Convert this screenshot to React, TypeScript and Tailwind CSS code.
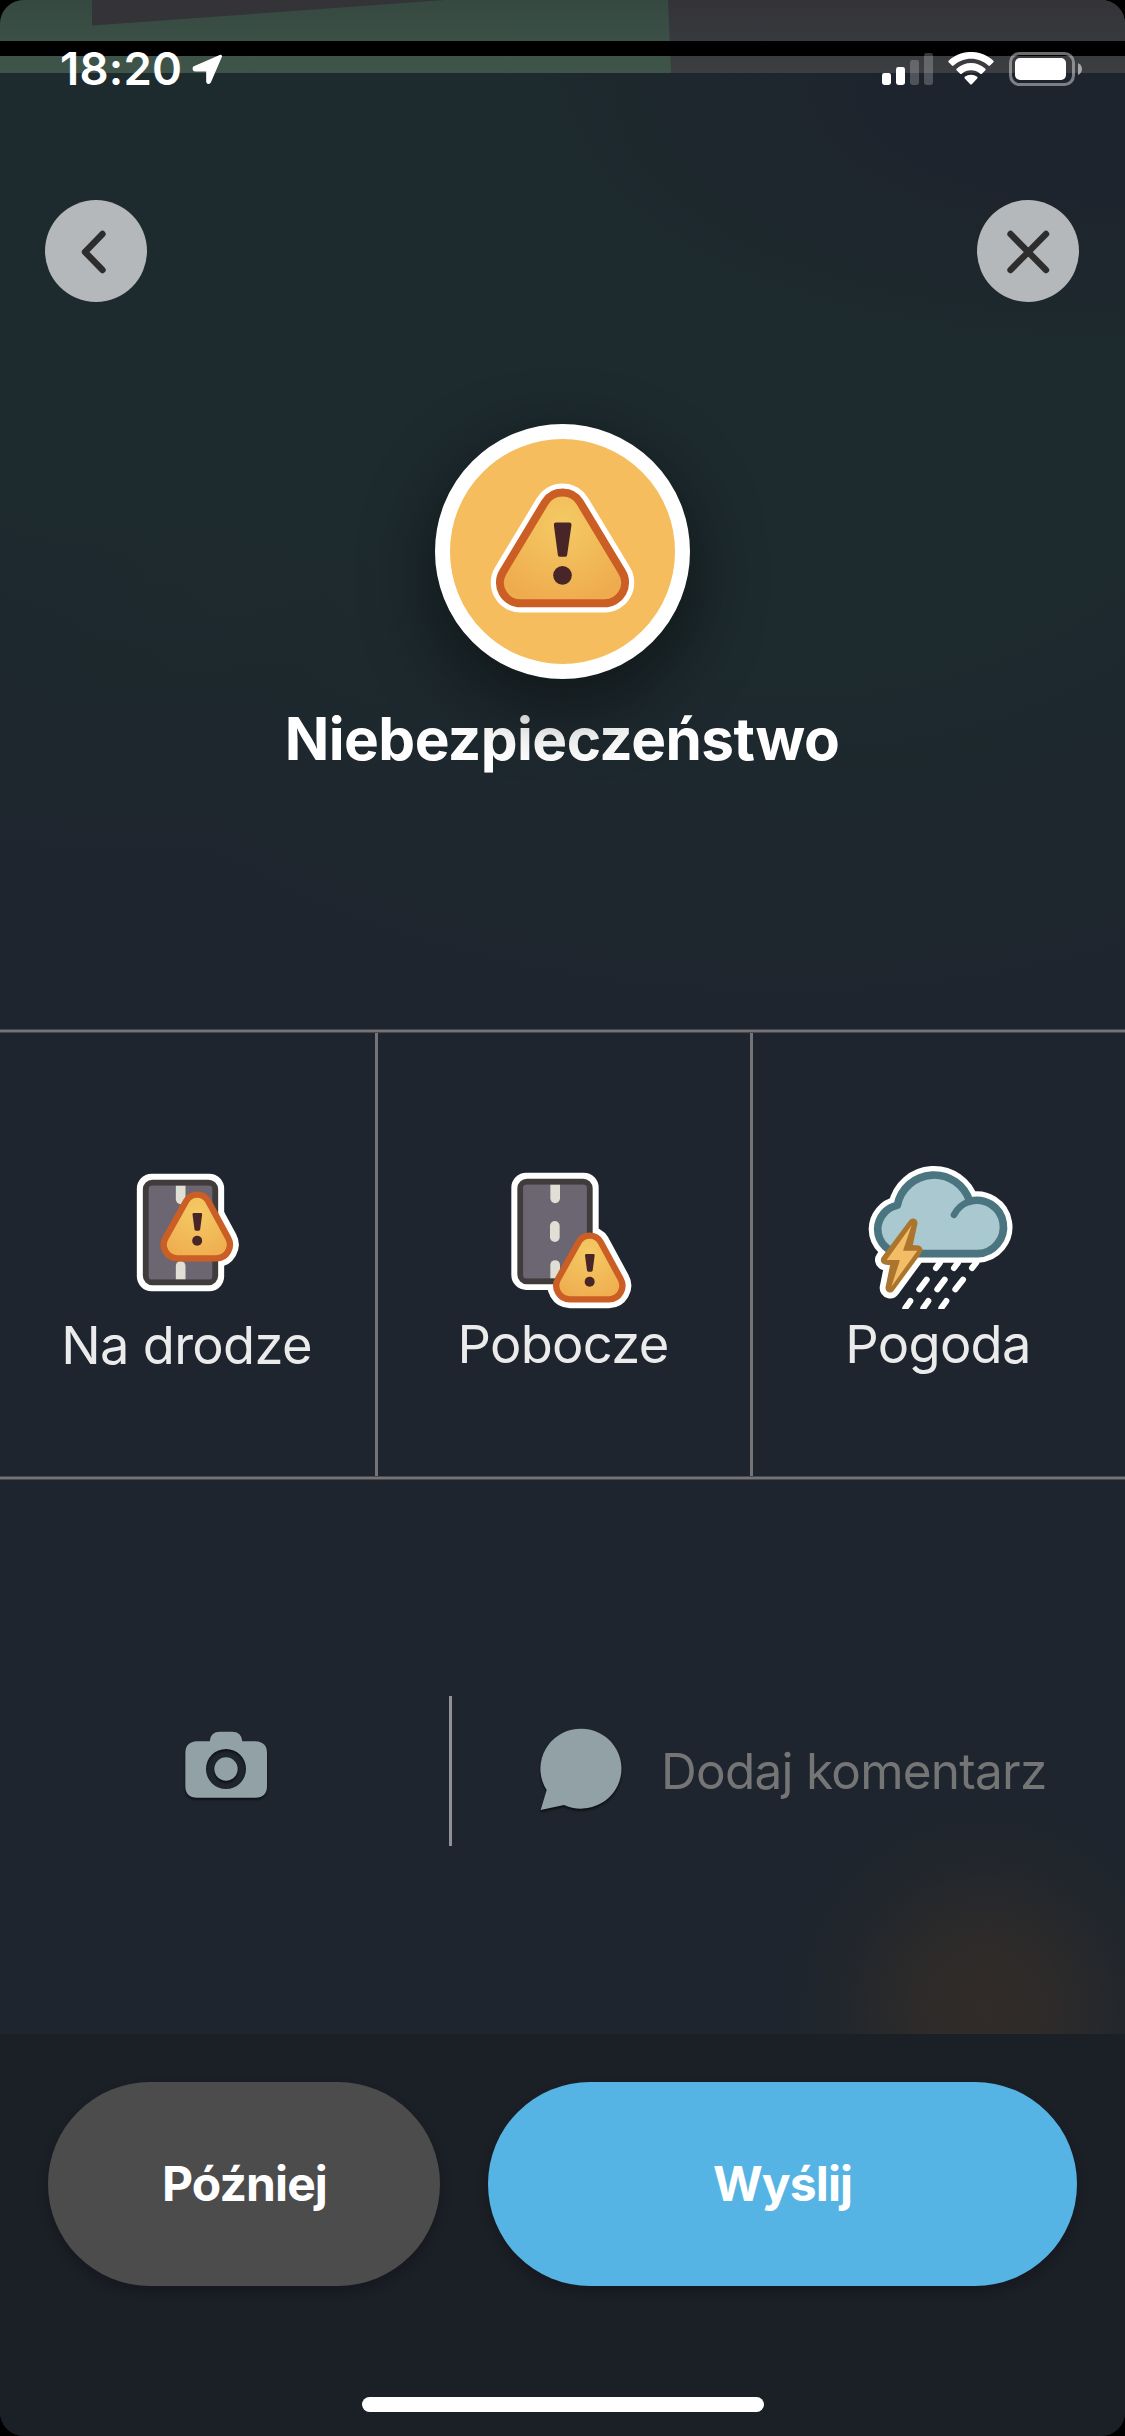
import React from "react";

function StatusBar() {
  return (
    <div className="absolute inset-x-0 top-0 flex h-[138px] items-start text-white">
      <span className="ml-[60px] mt-[42px] w-[124px] whitespace-nowrap text-[45.5px] font-semibold leading-[54px] tracking-[0.2px]">
        18:20
      </span>
      <svg className="ml-[7px] mt-[53px] h-8 w-8" viewBox="0 0 32 32">
        <path
          d="M29 2.6 L2.6 14.2 Q1.6 17.4 4 17.8 H15 Q15.9 17.8 15.9 18.7 V29 Q17 31.4 19 29.6 L30.3 3.4 Q30.3 2 29 2.6 Z"
          fill="white"
          stroke="white"
          strokeWidth="1.4"
          strokeLinejoin="round"
        />
      </svg>
      <svg className="ml-auto mr-[15px] mt-[53px] h-8 w-[51px]" viewBox="0 0 51 32" fill="white">
        <rect x="0" y="20" width="9" height="12" rx="2.4" />
        <rect x="14" y="14" width="9" height="18" rx="2.4" />
        <rect x="28" y="7" width="9" height="25" rx="2.4" opacity=".22" />
        <rect x="42" y="0" width="9" height="32" rx="2.4" opacity=".22" />
      </svg>
      <svg className="mr-[15px] mt-[52px] h-[33px] w-[46px]" viewBox="0 0 46 33" fill="white">
        <path d="M0.6 8.8 C13 -3 33 -3 45.4 8.8 Q46 9.6 45.4 10.3 L42 13.6 Q41.2 14.2 40.4 13.6 C30.5 4.6 15.5 4.6 5.6 13.6 Q4.8 14.2 4 13.6 L0.6 10.3 Q0 9.6 0.6 8.8 Z" />
        <path d="M8.6 16.7 C17 9.2 29 9.2 37.4 16.7 Q38 17.5 37.4 18.2 L33.9 21.7 Q33.1 22.4 32.3 21.7 C27 17.2 19 17.2 13.7 21.7 Q12.9 22.4 12.1 21.7 L8.6 18.2 Q8 17.5 8.6 16.7 Z" />
        <path d="M16.8 24.8 C20.2 22 25.8 22 29.2 24.8 Q30 25.6 29.2 26.4 L23.8 32.2 Q23 32.9 22.2 32.2 L16.8 26.4 Q16 25.6 16.8 24.8 Z" />
      </svg>
      <svg className="mr-[42px] mt-[52px] h-[34px] w-[74px]" viewBox="0 0 74 34">
        <rect x="1.5" y="1.5" width="63" height="31" rx="9" fill="none" stroke="white" strokeOpacity=".42" strokeWidth="3" />
        <rect x="6" y="6" width="51" height="22" rx="5" fill="white" />
        <path d="M69 11 Q73 13 73 17 Q73 21 69 23 Z" fill="white" fillOpacity=".55" />
      </svg>
    </div>
  );
}

/* Strip of the map that stays visible above the sheet */
function MapStrip() {
  return (
    <svg className="block h-[73px] w-full shrink-0" viewBox="0 0 1125 73">
      <defs>
        <linearGradient id="land" x1="0" y1="0" x2="0" y2="1">
          <stop offset="0" stopColor="#354941" />
          <stop offset="1" stopColor="#40554a" />
        </linearGradient>
        <linearGradient id="street" x1="0" y1="0" x2="0" y2="1">
          <stop offset="0" stopColor="#333338" />
          <stop offset="1" stopColor="#3c3e42" />
        </linearGradient>
      </defs>
      <rect width="1125" height="73" fill="url(#land)" />
      <path d="M668 0 H1125 V73 H671 Z" fill="url(#street)" />
      <path d="M92 0 H445 L92 25.5 Z" fill="#333338" />
      <rect y="41" width="1125" height="15" fill="black" />
    </svg>
  );
}

function RoundButton({ label, children }: { label: string; children: React.ReactNode }) {
  return (
    <button aria-label={label} className="h-[102px] w-[102px] rounded-full bg-[#b4b8ba]">
      <svg
        className="h-full w-full"
        viewBox="0 0 102 102"
        fill="none"
        stroke="#2d2d2d"
        strokeWidth="6.4"
        strokeLinecap="round"
        strokeLinejoin="round"
      >
        {children}
      </svg>
    </button>
  );
}

function HazardBadge() {
  return (
    <div className="relative z-10 h-[255px] w-[255px] rounded-full border-[15px] border-white bg-[#f5bd5d] shadow-[0_24px_64px_6px_rgba(10,14,14,0.6)]">
      <svg className="h-[225px] w-[225px]" viewBox="150 117 675 675">
        <defs>
          <radialGradient id="hazard" gradientUnits="userSpaceOnUse" cx="487" cy="370" r="240">
            <stop offset="0" stopColor="#f4ca64" />
            <stop offset="1" stopColor="#efac4f" />
          </radialGradient>
        </defs>
        <path
          d="M434.5 307.5 A62 62 0 0 1 540.5 307.5 L666 515.5 A62 62 0 0 1 613 610 H362 A62 62 0 0 1 309 515.5 Z"
          fill="white"
          stroke="white"
          strokeWidth="55"
        />
        <path
          d="M434.5 307.5 A62 62 0 0 1 540.5 307.5 L666 515.5 A62 62 0 0 1 613 610 H362 A62 62 0 0 1 309 515.5 Z"
          fill="url(#hazard)"
          stroke="#cb5e24"
          strokeWidth="24"
        />
        <path
          d="M468 374 H508 L495 464 H480 Z"
          fill="#482628"
          stroke="#482628"
          strokeWidth="13"
          strokeLinejoin="round"
        />
        <circle cx="487.5" cy="526" r="28" fill="#482628" />
      </svg>
    </div>
  );
}

const SMALL_TRIANGLE =
  "M437 153 A38 38 0 0 1 503 153 L563 264 A40 41 0 0 1 528 325 H411 A41 41 0 0 1 375 264 Z";

function SmallTriangle() {
  return (
    <g>
      <path d={SMALL_TRIANGLE} fill="url(#hazardSmall)" stroke="#cb5e24" strokeWidth="19" />
      <path d="M460 193 H481 L475 238 H466 Z" fill="#482628" stroke="#482628" strokeWidth="8" strokeLinejoin="round" />
      <circle cx="470" cy="272" r="15" fill="#482628" />
    </g>
  );
}

function RoadBase() {
  return (
    <g>
      <rect x="316" y="98" width="208" height="299" rx="20" fill="#6c6672" stroke="#403c3b" strokeWidth="18" />
      <rect x="325" y="107" width="190" height="281" rx="8" fill="#6c6672" />
      <path d="M406 107 H435 V148 A14.5 14.5 0 0 1 406 148 Z" fill="#dfdfd6" />
      <path d="M406 388 H435 V348 A14.5 14.5 0 0 0 406 348 Z" fill="#dfdfd6" />
    </g>
  );
}

function OnRoadIcon() {
  return (
    <svg className="h-36 w-[150px]" viewBox="217.5 45 450 432">
      <defs>
        <radialGradient id="hazardSmall" gradientUnits="userSpaceOnUse" cx="470" cy="185" r="150">
          <stop offset="0" stopColor="#f4ca64" />
          <stop offset="1" stopColor="#efac4f" />
        </radialGradient>
      </defs>
      <rect x="289" y="71" width="262" height="353" rx="45" fill="white" />
      <path d={SMALL_TRIANGLE} fill="white" stroke="white" strokeWidth="53" />
      <RoadBase />
      <SmallTriangle />
    </svg>
  );
}

function ShoulderIcon() {
  return (
    <svg className="h-36 w-[150px]" viewBox="177 45 450 432">
      <rect x="244" y="68" width="262" height="352" rx="45" fill="white" />
      <g transform="translate(9 123)">
        <path d={SMALL_TRIANGLE} fill="white" stroke="white" strokeWidth="53" />
      </g>
      <g transform="translate(-45 -3)">
        <RoadBase />
      </g>
      <rect x="360" y="213" width="29" height="63" rx="14.5" fill="#dfdfd6" />
      <g transform="translate(9 123)">
        <SmallTriangle />
      </g>
    </svg>
  );
}

const CLOUD =
  "M474 341 H248 A75 75 0 0 1 173 267 A75 75 0 0 1 232 196 A112 112 0 0 1 449 184 A80 80 0 1 1 474 341 Z";
const BOLT = "M279 249 L196 360 L226 365 L210 444 L294 330 L262 327 Z";

function WeatherIcon() {
  return (
    <svg className="h-36 w-[150px]" viewBox="132 75 450 432" strokeLinecap="round" strokeLinejoin="round">
      <path
        d="M360 368 L348 384 M414 368 L402 384 M469 368 L456 384 M320 419 L298 448 M374 419 L352 448 M429 419 L406 448 M271 483 L256 504 M325 483 L310 504 M379 483 L364 504"
        stroke="white"
        strokeWidth="18"
        fill="none"
      />
      <path d={CLOUD} fill="white" stroke="white" strokeWidth="54" />
      <path d={BOLT} fill="white" stroke="white" strokeWidth="62" />
      <path d={CLOUD} fill="#a9c8d0" stroke="#4a747f" strokeWidth="23" />
      <path d="M449 184 Q416 196 402 224" fill="none" stroke="#4a747f" strokeWidth="20" />
      <path d={BOLT} fill="#f3bd68" stroke="#ab752d" strokeWidth="27" />
      <path d="M275 256 L200 360 H240 L214 440 L292 332 H249 Z" fill="#f3bd68" strokeWidth="0" />
    </svg>
  );
}

function CameraIcon() {
  return (
    <svg
      className="mt-[30px] h-[77px] w-[92px] drop-shadow-[0_2px_1px_rgba(0,0,0,0.6)]"
      viewBox="120 138 276 231"
      fill="#92a1a6"
    >
      <path
        fillRule="evenodd"
        d="M171 184 H209 Q211 155 240 155 H276 Q305 155 307 184 H346 Q381 186 381 219 V318 Q381 353 346 353 H171 Q136 353 136 318 V219 Q136 186 171 184 Z M258 207 A60 60 0 1 0 258 327 A60 60 0 1 0 258 207 Z"
      />
      <circle cx="258" cy="267" r="35" />
    </svg>
  );
}

function BubbleIcon() {
  return (
    <svg
      className="mt-[28px] h-[90px] w-[90px] drop-shadow-[0_2px_1px_rgba(0,0,0,0.6)]"
      viewBox="1188 132 270 270"
      fill="#92a1a6"
    >
      <path d="M1220 330 A121.5 120 0 1 1 1272 375 L1202 390 Z" />
    </svg>
  );
}

const OPTIONS = [
  { label: "Na drodze", icon: <OnRoadIcon />, text: "mt-[6px]" },
  { label: "Pobocze", icon: <ShoulderIcon />, text: "mt-[5px]" },
  { label: "Pogoda", icon: <WeatherIcon />, text: "mt-[5px]" },
];

export default function App() {
  return (
    <div className="w-[1125px] bg-black font-['Inter',sans-serif]">
      <div className="relative flex h-[2436px] flex-col overflow-hidden rounded-[24px] bg-[#1e252e] bg-[radial-gradient(ellipse_225px_235px_at_985px_2010px,#312b29_0%,rgba(48,44,41,0.85)_30%,rgba(43,42,41,0.45)_58%,rgba(36,38,42,0.15)_80%,rgba(30,37,46,0)_100%),radial-gradient(ellipse_560px_260px_at_1100px_90px,#1e242d_40%,rgba(30,36,45,0)_100%),radial-gradient(ellipse_900px_620px_at_780px_380px,#1d2a2e_45%,rgba(29,42,46,0)_100%),radial-gradient(ellipse_800px_700px_at_150px_160px,#1d2a2e_50%,rgba(29,42,46,0)_100%)]">
        <MapStrip />
        <StatusBar />

        <nav className="mt-[127px] flex h-[103px] justify-between pl-[45px] pr-[46px]">
          <RoundButton label="Wstecz">
            <path d="M57.5 34 L40 52 L57.5 70" />
          </RoundButton>
          <RoundButton label="Zamknij">
            <path d="M33.5 34 L69 70 M69 34 L33.5 70" />
          </RoundButton>
        </nav>

        <header className="mt-[121px] flex flex-col items-center">
          <HazardBadge />
          <h1 className="mt-[24px] whitespace-nowrap pr-px text-[58.5px] font-bold leading-[72px] tracking-[-0.55px] text-white">
            Niebezpieczeństwo
          </h1>
        </header>

        <section className="mt-[254px]">
          <div className="h-[4px] border-y border-[#47494e] bg-[#747476]" />
          <div className="grid h-[443px] grid-cols-[375px_3px_372px_3px_372px]">
            {OPTIONS.map(({ label, icon, text }, i) => (
              <React.Fragment key={label}>
                {i > 0 && <div className="bg-[#747476]" />}
                <button className="flex flex-col items-center justify-start pt-[132px]">
                  {icon}
                  <span
                    className={`whitespace-nowrap pr-[2px] text-[52.4px] font-normal leading-[60px] tracking-[-0.7px] text-[#ebebeb] ${text}`}
                  >
                    {label}
                  </span>
                </button>
              </React.Fragment>
            ))}
          </div>
          <div className="h-[4px] border-y border-[#47494e] bg-[#747476]" />
        </section>

        <section className="mt-[216px] flex h-[150px] items-start">
          <button aria-label="Dodaj zdjęcie" className="flex h-full w-[449px] items-start justify-center pl-[3px]">
            <CameraIcon />
          </button>
          <div className="h-full w-[3px] bg-[#8e9195]" />
          <div className="flex flex-1 items-start pl-[84px]">
            <BubbleIcon />
            <span className="ml-[35px] mt-[45px] whitespace-nowrap text-[49.5px] font-normal leading-[60px] tracking-[-0.75px] text-[#757575]">
              Dodaj komentarz
            </span>
          </div>
        </section>

        <footer className="mt-auto h-[402px] bg-[#1b1f26] px-12 pt-12 text-[48px] font-bold leading-[60px] tracking-[-0.9px] text-white">
          <div className="flex h-[204px] gap-12">
            <button className="w-[392px] rounded-full bg-[#4c4c4c] pl-px shadow-[0_6px_12px_rgba(0,0,0,0.2)]">Później</button>
            <button className="w-[589px] rounded-full bg-[#55b4e3] shadow-[0_6px_12px_rgba(0,0,0,0.2)]">Wyślij</button>
          </div>
          <div className="mx-auto mt-[111px] h-[15px] w-[402px] rounded-full bg-white" />
        </footer>
      </div>
    </div>
  );
}
